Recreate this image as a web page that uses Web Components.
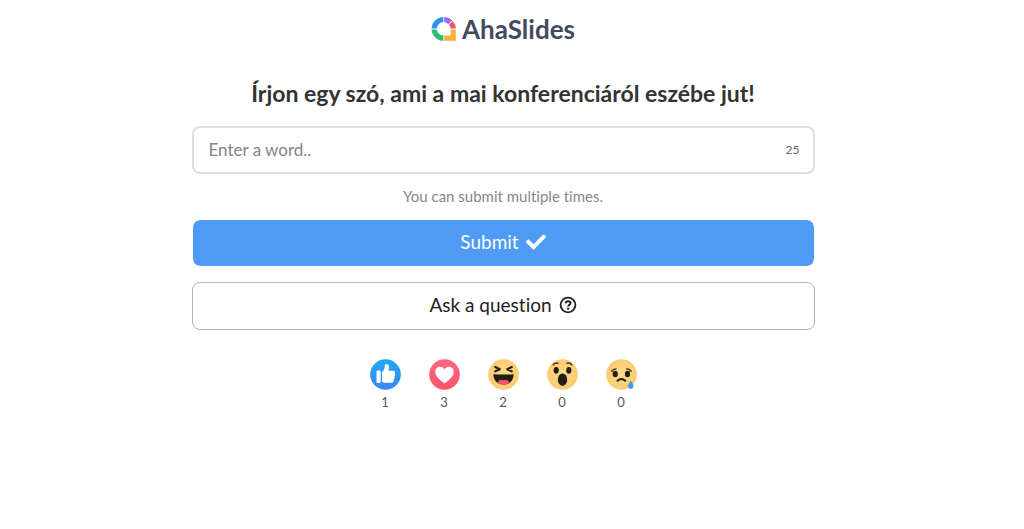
<!DOCTYPE html>
<html lang="hu">
<head>
<meta charset="utf-8">
<meta name="viewport" content="width=device-width, initial-scale=1">
<title>AhaSlides</title>
<style>
body { margin: 0; background: #fff; color: #333; font-family: Lato, "Noto Sans", sans-serif; font-variant-ligatures: none; }
</style>
</head>
<body>
<aha-page>
  <aha-logo slot="logo">AhaSlides</aha-logo>
  <span slot="title">Írjon egy szó, ami a mai konferenciáról eszébe jut!</span>
  <word-input placeholder="Enter a word.." limit="25"></word-input>
  <aha-hint>You can submit multiple times.</aha-hint>
  <aha-button variant="primary" icon="check">Submit</aha-button>
  <aha-button icon="question">Ask a question</aha-button>
  <reaction-bar slot="reactions">
    <reaction-item kind="like">1</reaction-item>
    <reaction-item kind="love">3</reaction-item>
    <reaction-item kind="laugh">2</reaction-item>
    <reaction-item kind="wow">0</reaction-item>
    <reaction-item kind="sad">0</reaction-item>
  </reaction-bar>
</aha-page>
<script>
class BaseElement extends HTMLElement {
  constructor() {
    super();
    this.attachShadow({ mode: 'open' });
  }
  connectedCallback() {
    this.shadowRoot.innerHTML = this.render();
  }
}

customElements.define('aha-page', class extends BaseElement {
  render() {
    return `<style>
      :host { display: block; padding: 15px 34px 16px 16px; }
      main { max-width: 623px; margin: 0 auto; display: flex; flex-direction: column; }
      header { display: flex; justify-content: center; }
      h1 { margin: 34px 0 17px; font-size: 23px; line-height: 32px; font-weight: 700; text-align: center; color: #333; }
      footer { margin-top: 29px; }
    </style>
    <main>
      <header><slot name="logo"></slot></header>
      <h1><slot name="title"></slot></h1>
      <slot></slot>
      <footer><slot name="reactions"></slot></footer>
    </main>`;
  }
});

customElements.define('aha-logo', class extends BaseElement {
  render() {
    return `<style>
      :host { display: flex; align-items: center; gap: 5px; height: 28px; color: #434a5f; font-size: 26px; line-height: 28px; font-weight: 700; }
      svg { display: block; width: 26px; height: 26px; }
    </style>
    <svg viewBox="0 0 26 26" aria-hidden="true">
      <path fill="#2f8ff5" d="M12.4 1A12 12 0 0 0 .6 12.6h5.2A7 7 0 0 1 12.4 6Z"/>
      <path fill="#9b6cf0" d="M13.2 1a12 12 0 0 1 8 3.500l-3.800 3.800A7 7 0 0 0 13.2 6Z"/>
      <path fill="#e85a6b" d="M21.8 5a12 12 0 0 1 3 7.600h-5.200a7 7 0 0 0-1.600-3.800Z"/>
      <path fill="#fbb03b" d="M24.8 13.400v7.800c0 1.500.2 2.500.8 4-1.400-.4-2.400-.4-4-.4h-8.400v-5.200h6.400v-6.200Z"/>
      <path fill="#2fbf71" d="M.6 13.400h5.200a7 7 0 0 0 6.600 6.200v5.200A12 12 0 0 1 .6 13.400Z"/>
    </svg>
    <slot></slot>`;
  }
});

customElements.define('word-input', class extends BaseElement {
  render() {
    return `<style>
      :host { display: block; }
      label { display: flex; align-items: center; box-sizing: border-box; height: 48px; padding: 0 13px 0 15px; border: 2px solid #dedede; border-radius: 8px; background: #fff; }
      input { flex: 1; min-width: 0; padding: 0; border: 0; outline: 0; background: none; font: inherit; font-size: 17px; line-height: 24px; color: #333; }
      input::placeholder { color: #858585; opacity: 1; }
      span { font-size: 12px; line-height: 16px; color: #666; }
    </style>
    <label><input type="text" aria-label="Word" maxlength="${this.getAttribute('limit')}" placeholder="${this.getAttribute('placeholder')}"><span>${this.getAttribute('limit')}</span></label>`;
  }
});

customElements.define('aha-hint', class extends BaseElement {
  render() {
    return `<style>
      :host { display: block; margin: 12px 0 13px; font-size: 15px; line-height: 20px; text-align: center; color: #888; }
    </style><slot></slot>`;
  }
});

const buttonIcons = {
  check: '<svg viewBox="0 0 512 512" width="20" height="20" aria-hidden="true"><path fill="currentColor" d="M174 439 7 272c-10-10-10-26 0-36l36-36c10-10 26-10 36 0l113 112L433 71c10-10 26-10 36 0l36 36c10 10 10 26 0 36L210 439c-10 10-26 10-36 0Z"/></svg>',
  question: '<svg viewBox="0 0 18 18" width="18" height="18" fill="none" stroke="currentColor" stroke-width="1.800" aria-hidden="true"><circle cx="9" cy="9" r="7.400"/><path stroke-width="2" d="M6.500 7.200C6.900 5.700 7.900 5.200 9 5.200c1.400 0 2.500.8 2.500 2 0 1.700-2.300 1.700-2.300 3.300"/><circle cx="9.100" cy="12.600" r="1.200" fill="currentColor" stroke="none"/></svg>'
};

customElements.define('aha-button', class extends BaseElement {
  render() {
    return `<style>
      :host { display: block; }
      :host(:not([variant])) { margin-top: 15px; }
      button { display: flex; align-items: center; justify-content: center; gap: 7px; box-sizing: border-box; width: 100%; height: 48px; padding: 0 16px 2px; border: 1px solid #b3b3b3; border-radius: 8px; background: #fff; color: #222; font: inherit; font-size: 19px; line-height: 24px; cursor: pointer; }
      :host([variant="primary"]) button { background: #4f9af3; color: #fff; border-color: #fff; background-clip: padding-box; }
      svg { display: block; flex: none; }
    </style>
    <button type="button"><slot></slot>${buttonIcons[this.getAttribute('icon')]}</button>`;
  }
});

customElements.define('reaction-bar', class extends BaseElement {
  render() {
    return `<style>:host { display: flex; justify-content: center; gap: 28px; }</style><slot></slot>`;
  }
});

const faceFill = '<defs><radialGradient id="g"><stop offset="0" stop-color="#ffdb85"/><stop offset="1" stop-color="#fccb72"/></radialGradient></defs><circle cx="15.500" cy="15.500" r="15.300" fill="url(#g)"/>';
const faces = {
  like: ['Like', '<defs><linearGradient id="g" x2="0" y2="1"><stop stop-color="#22a8f5"/><stop offset="1" stop-color="#3b86f7"/></linearGradient></defs><circle cx="15.500" cy="15.500" r="15.300" fill="url(#g)"/><rect x="6.500" y="11.500" width="4.200" height="12.500" rx="1.200" fill="#fff"/><path fill="#fff" d="M12 13.200c2-2 2.700-3.700 2.700-6.200 0-2.800 4.300-2.800 4.300 1.500 0 1.200-.3 2.300-.6 3.200H23c2 0 2.600 1.800 1.600 2.900.9.9.8 2.200-.2 2.900.6 1 .3 2.100-.7 2.700.5 1.600-.4 3.500-2.300 3.500h-5.600c-1.600 0-2.800-.4-3.800-1Z"/>'],
  love: ['Love', '<defs><linearGradient id="g" x2="0" y2="1"><stop stop-color="#ff6682"/><stop offset="1" stop-color="#f9556b"/></linearGradient></defs><circle cx="15.500" cy="15.500" r="15.300" fill="url(#g)"/><path fill="#fff" d="M15.500 24.500C10.500 20.800 6.300 17.500 6.300 12.800c0-5.500 6.900-6.700 9.200-2.300 2.300-4.400 9.200-3.200 9.200 2.300 0 4.700-4.200 8-9.200 11.700Z"/>'],
  laugh: ['Haha', faceFill + '<path fill="none" stroke="#211d18" stroke-width="2.100" stroke-linecap="round" stroke-linejoin="round" d="m7.200 8 4.500 2.200-4.500 2.200M23.800 8l-4.500 2.200 4.500 2.200"/><path fill="#211d18" d="M5.400 15.300q10.100.6 20.200 0c0 6.400-4.200 10.300-10.100 10.300s-10.100-3.900-10.100-10.300Z"/><path fill="#f2546c" d="M9.500 23.400c2-3.200 4.500-3 6-1.900 1.500-1.100 4-1.300 6 1.900-1.600 1.500-3.600 2.200-6 2.200s-4.400-.7-6-2.200Z"/>'],
  wow: ['Wow', faceFill + '<ellipse cx="9.200" cy="11.300" rx="2.600" ry="3.400" fill="#211d18"/><ellipse cx="21.800" cy="11.300" rx="2.600" ry="3.400" fill="#211d18"/><ellipse cx="15.500" cy="20.700" rx="4.700" ry="6.200" fill="#211d18"/><path fill="none" stroke="#4c381c" stroke-width="1.500" stroke-linecap="round" d="M6.300 5.800Q8 3.500 11 4.200M24.700 5.800Q23 3.500 20 4.200"/>'],
  sad: ['Sad', faceFill + '<ellipse cx="9.200" cy="15" rx="2.600" ry="3.200" fill="#211d18"/><ellipse cx="21.500" cy="15" rx="2.600" ry="3.200" fill="#211d18"/><path fill="none" stroke="#211d18" stroke-width="1.900" stroke-linecap="round" d="M11.500 21.800q3.900-3.600 7.800 0"/><path fill="none" stroke="#4c381c" stroke-width="1.500" stroke-linecap="round" d="M5.600 12.200Q7.300 9.800 10 10M25.200 12.200q-1.700-2.400-4.400-2.200"/><path fill="#4499f3" d="M24.800 21.500c1.800 2.900 2.700 4.200 2.700 5.500 0 4-5.400 4-5.400 0 0-1.300.9-2.600 2.700-5.500Z"/>']
};

customElements.define('reaction-item', class extends BaseElement {
  render() {
    const [name, art] = faces[this.getAttribute('kind')];
    return `<style>
      :host { display: block; }
      button { display: flex; flex-direction: column; align-items: center; gap: 4px; width: 31px; padding: 0; border: 0; background: none; color: #555; font: inherit; font-size: 13px; line-height: 16px; cursor: pointer; }
      svg { display: block; overflow: visible; }
    </style>
    <button type="button" title="${name}"><svg viewBox="0 0 31 31" width="31" height="31" aria-hidden="true">${art}</svg><span><slot></slot></span></button>`;
  }
});
</script>
</body>
</html>
